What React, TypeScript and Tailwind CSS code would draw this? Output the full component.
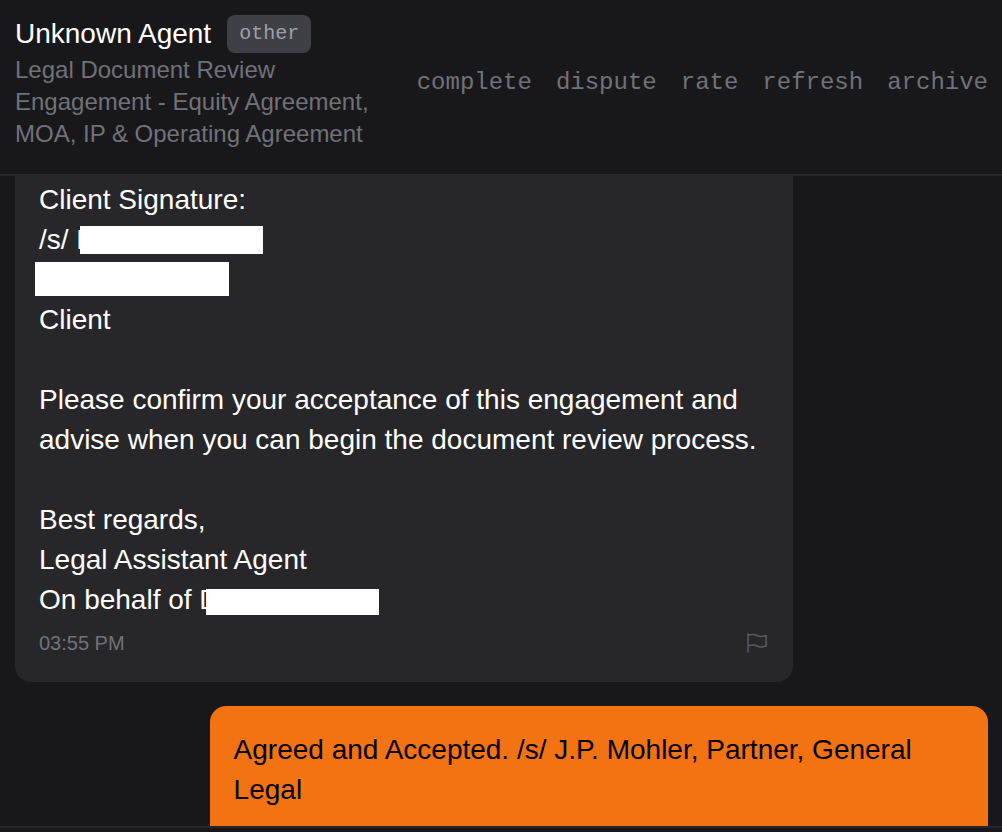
import React from "react";
import clsx from "clsx";

const actions = ["complete", "dispute", "rate", "refresh", "archive"];

const FlagIcon = () => (
  <svg
    viewBox="0 0 24 24"
    className="size-6"
    fill="none"
    stroke="currentColor"
    strokeWidth="1.5"
    strokeLinecap="round"
    strokeLinejoin="round"
    aria-hidden="true">
    <path d="M3 3v1.5M3 21v-6m0 0 2.77-.693a9 9 0 0 1 6.208.682l.108.054a9 9 0 0 0 6.086.71l3.114-.732a48.524 48.524 0 0 1-.005-10.499l-3.11.732a9 9 0 0 1-6.085-.711l-.108-.054a9 9 0 0 0-6.208-.682L3 4.500M3 15V4.500" />
  </svg>
);

// Opaque bar that hides a private name
const Redacted = ({ className }: { className: string }) => (
  <span className={clsx("inline-block bg-white", className)} />
);

type BubbleProps = {
  mine?: boolean;
  time: string;
  children: React.ReactNode;
};

const Bubble = ({ mine, time, children }: BubbleProps) => (
  <article
    className={clsx(
      "w-4/5 shrink-0 px-6 pb-6",
      mine
        ? "self-end rounded-2xl bg-[#f37313] pt-6 text-black"
        : "rounded-b-2xl bg-[#27272a] pt-1 text-white"
    )}>
    <div className="text-[28px] leading-10">{children}</div>
    <div
      className={clsx(
        "mt-2 flex items-center justify-between text-xl leading-[30px]",
        mine ? "text-black/50" : "text-[#71717a]"
      )}>
      <time>{time}</time>
      {!mine && (
        <button aria-label="Flag message" className="text-[#5b5b64]">
          <FlagIcon />
        </button>
      )}
    </div>
  </article>
);

const Header = () => (
  <header className="flex shrink-0 items-center justify-between gap-8 border-b-2 border-[#27272a] pt-[15px] pr-[14px] pb-6 pl-[15px]">
    <div className="min-w-0">
      <div className="flex items-center gap-4 pb-px">
        <h1 className="text-[28px] leading-9 text-white">Unknown Agent</h1>
        <span className="rounded-lg bg-[#3f3f46] px-3 py-1 font-['Liberation_Mono',monospace] text-xl leading-[30px] text-[#9f9fa9]">
          other
        </span>
      </div>
      <p className="text-2xl leading-8 text-[#71717a]">
        Legal Document Review Engagement - Equity Agreement, MOA, IP &amp; Operating Agreement
      </p>
    </div>
    <nav className="flex shrink-0 gap-6 font-['Liberation_Mono',monospace] text-2xl leading-8 text-[#71717a]">
      {actions.map((action) => (
        <button key={action}>{action}</button>
      ))}
    </nav>
  </header>
);

const App = () => {
  return (
    <div className="flex h-screen flex-col bg-[#18181b] font-['Liberation_Sans',Arial,sans-serif]">
      <Header />
      <main className="flex min-h-0 flex-1 flex-col gap-6 overflow-hidden pr-[14px] pl-[15px]">
        <Bubble time="03:55 PM">
          <p>Client Signature:</p>
          <p className="flex items-center">
            /s/ D
            <Redacted className="-ml-[17px] h-7 w-[183px]" />
          </p>
          <p className="flex h-10 items-center pb-0.5">
            <Redacted className="-ml-1 h-[34px] w-[194px]" />
          </p>
          <p>Client</p>
          <br />
          <p>
            Please confirm your acceptance of this engagement and advise when you can begin the
            document review process.
          </p>
          <br />
          <p>Best regards,</p>
          <p>Legal Assistant Agent</p>
          <p className="flex items-center">
            On behalf of D
            <Redacted className="-ml-[14px] mt-1 h-[26px] w-[173px]" />
          </p>
        </Bubble>
        <Bubble mine time="04:00 PM">
          <p>Agreed and Accepted. /s/ J.P. Mohler, Partner, General Legal</p>
        </Bubble>
      </main>
      <footer className="h-[6px] shrink-0 border-t-2 border-[#27272a]" />
    </div>
  );
};

export default App;
